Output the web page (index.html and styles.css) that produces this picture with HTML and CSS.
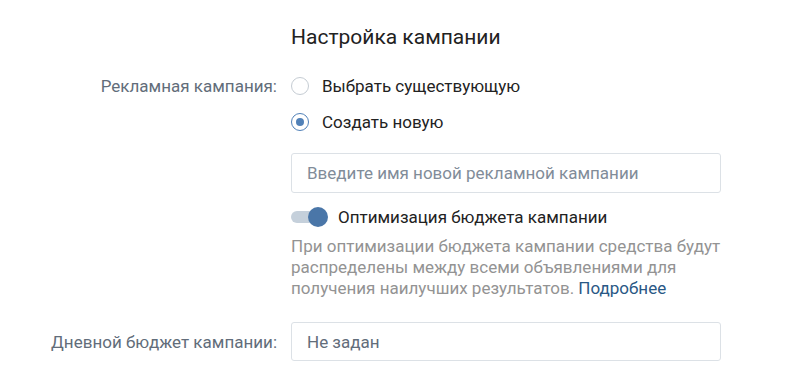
FILE: index.html
```html
<!DOCTYPE html>
<html lang="ru">
  <head>
    <meta charset="UTF-8" />
    <meta name="viewport" content="width=device-width, initial-scale=1.0" />
    <title>Настройка кампании</title>
    <link rel="stylesheet" href="styles.css">
  </head>
  <body>
    <form class="campaign-form">
      <h2 class="form-title">Настройка кампании</h2>

      <div class="form-row">
        <div class="form-label">Рекламная кампания:</div>
        <div class="form-fields">
          <label class="radio">
            <span class="radio-circle"></span>
            Выбрать существующую
          </label>
          <label class="radio checked">
            <span class="radio-circle"></span>
            Создать новую
          </label>
          <input class="text-input name-input" type="text" placeholder="Введите имя новой рекламной кампании" />
          <label class="toggle">
            <span class="toggle-track"><span class="toggle-knob"></span></span>
            Оптимизация бюджета кампании
          </label>
          <p class="form-hint">
            При оптимизации бюджета кампании средства будут распределены между всеми объявлениями для
            получения наилучших результатов. <a href="#">Подробнее</a>
          </p>
        </div>
      </div>

      <div class="form-row budget-row">
        <div class="form-label">Дневной бюджет кампании:</div>
        <div class="form-fields">
          <input class="text-input budget-input" type="text" value="Не задан" />
        </div>
      </div>
    </form>
  </body>
</html>
```

FILE: styles.css
```css
* {
  box-sizing: border-box;
}

body {
  margin: 0;
  background: #fff;
  font-family: Roboto, "Noto Sans", Arial, sans-serif;
  color: #222;
}

a {
  color: #2a5885;
  text-decoration: none;
}

.campaign-form {
  width: 721px;
  padding-top: 24px;
}

.form-title {
  margin: 0 0 24px 291px;
  font-size: 21px;
  font-weight: 400;
  line-height: 26px;
  color: #222;
}

.form-row {
  display: grid;
  grid-template-columns: 277px 1fr;
  column-gap: 14px;
  align-items: start;
}

.form-label {
  text-align: right;
  font-size: 17px;
  line-height: 20px;
  color: #626d7a;
  padding-top: 2px;
}

.form-fields {
  display: flex;
  flex-direction: column;
}

.radio {
  display: flex;
  align-items: center;
  gap: 13px;
  height: 24px;
  font-size: 17px;
  color: #222;
  margin-bottom: 12px;
}

.radio-circle {
  width: 18px;
  height: 18px;
  border: 1px solid #c5ccd3;
  border-radius: 50%;
  display: flex;
  align-items: center;
  justify-content: center;
  flex-shrink: 0;
}

.radio.checked .radio-circle {
  border-color: #5181b8;
}

.radio.checked .radio-circle::after {
  content: "";
  width: 8px;
  height: 8px;
  border-radius: 50%;
  background: #5181b8;
}

.text-input {
  width: 100%;
  height: 40px;
  border: 1px solid #dce1e6;
  border-radius: 3px;
  padding: 0 15px;
  font-family: inherit;
  font-size: 17px;
  color: #222;
  background: #fff;
}

.text-input::placeholder {
  color: #818c99;
}

.name-input {
  margin-top: 7px;
  margin-bottom: 13px;
}

.toggle {
  display: flex;
  align-items: center;
  gap: 11px;
  font-size: 17px;
  color: #222;
  height: 22px;
}

.toggle-track {
  position: relative;
  width: 36px;
  height: 12px;
  border-radius: 6px;
  background: #c5d0db;
}

.toggle-knob {
  position: absolute;
  right: -1px;
  top: -4px;
  width: 20px;
  height: 20px;
  border-radius: 50%;
  background: #4a76a8;
}

.form-hint {
  margin: 8px -8px 0 0;
  font-size: 17px;
  line-height: 21px;
  color: #939393;
}

.budget-row {
  margin-top: 23px;
}

.budget-row .form-label {
  padding-top: 10px;
}

.budget-input {
  color: #626d7a;
  height: 39px;
}
```
